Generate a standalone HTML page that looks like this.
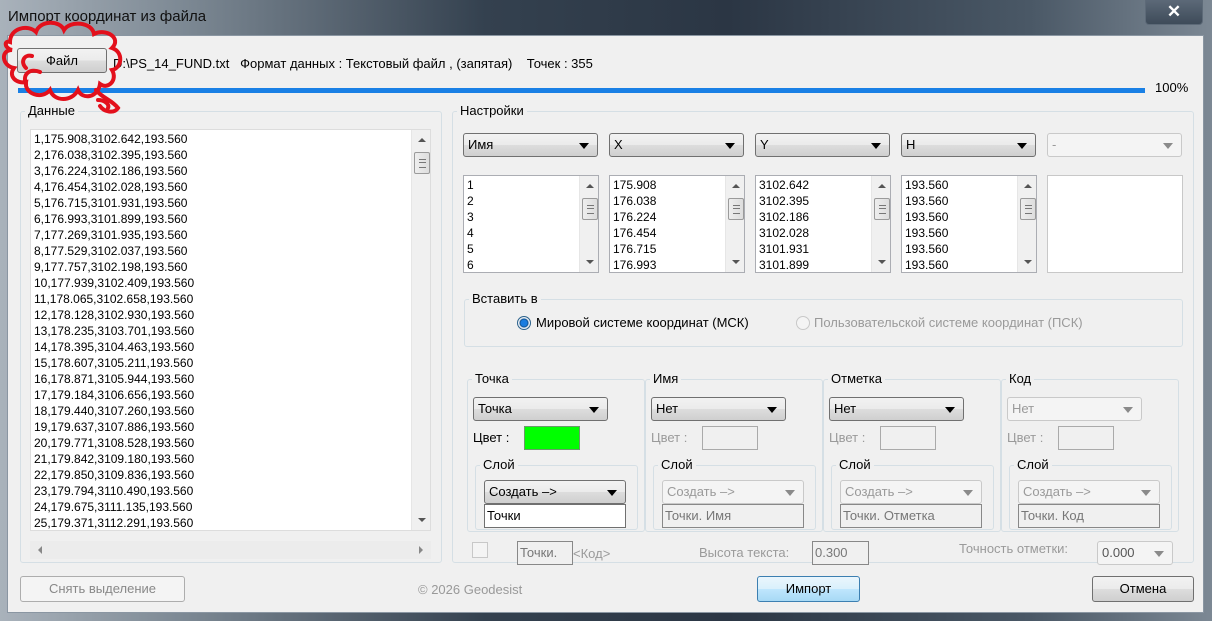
<!DOCTYPE html>
<html><head><meta charset="utf-8">
<style>
*{box-sizing:border-box;margin:0;padding:0}
body{width:1212px;height:621px;overflow:hidden;position:relative;font-family:"Liberation Sans",sans-serif;font-size:12px;color:#000;background:#2c3a48}
.a{position:absolute}
#frame{left:0;top:0;width:1212px;height:621px;background:linear-gradient(90deg,#a9b2bb 0%,#7d8994 15%,#34414f 40%,#2b3644 60%,#4a5866 85%,#7c8894 100%)}
#client{left:7px;top:35px;width:1197px;height:578px;background:#f0f0f0;border:1px solid #8a96a2}
.btn{position:absolute;border:1px solid #707070;border-radius:3px;background:linear-gradient(#f2f2f2,#ebebeb 50%,#dddddd 51%,#cfcfcf);text-align:center;font-size:13px}
.grp{position:absolute;border:1px solid #d5dfe5;border-radius:3px}
.gl{position:absolute;background:#f0f0f0;padding:0 3px;font-size:13px;top:-9px;left:4px;line-height:16px}
.cb{position:absolute;height:24px;border:1px solid #707070;border-radius:3px;background:linear-gradient(#f2f2f2,#ebebeb 50%,#dddddd 51%,#cfcfcf);font-size:13px;line-height:22px;padding-left:4px}
.cb::after{content:"";position:absolute;right:8px;top:9px;border-left:5px solid transparent;border-right:5px solid transparent;border-top:6px solid #000}
.cb.d{background:#f4f4f4;border-color:#c9c9c9;color:#9a9a9a}
.cb.d::after{border-top-color:#8a8a8a}
.lb{position:absolute;background:#fff;border:1px solid #abadb3;overflow:hidden;font-size:12px;line-height:16px}
.sb{position:absolute;top:0;right:0;width:19px;height:100%;background:#f0f0f0;border-left:1px solid #e6e6e6}
.sb .up{position:absolute;left:6px;top:8px;border-left:4px solid transparent;border-right:4px solid transparent;border-bottom:4px solid #555}
.sb .dn{position:absolute;left:6px;bottom:8px;border-left:4px solid transparent;border-right:4px solid transparent;border-top:4px solid #555}
.sb .th{position:absolute;left:2px;top:22px;width:16px;height:22px;border:1px solid #9a9a9a;border-radius:2px;background:linear-gradient(90deg,#eee,#ddd);}
.sb .th::after{content:"";position:absolute;left:4px;top:6px;width:7px;height:7px;border-top:1px solid #777;border-bottom:1px solid #777;background:linear-gradient(transparent 2px,#777 2px,#777 3px,transparent 3px)}
.tb{position:absolute;background:#fff;border:1px solid #707070;font-size:13px;line-height:22px;padding-left:2px}
.tb.d{background:#f0f0f0;border-color:#888;color:#777}
.gray{color:#9a9a9a}
</style></head><body>
<div class="a" id="frame"></div>
<div class="a" style="left:8px;top:8px;font-size:15px;color:#111">Импорт координат из файла</div>
<div class="a" style="left:1145px;top:0;width:58px;height:25px;border:1px solid #5d6a78;border-top:none;border-radius:0 0 4px 4px;background:linear-gradient(#5c6978,#3e4b59);color:#fff;text-align:center;font-size:17px;font-weight:bold;line-height:24px">✕</div>
<div class="a" id="client"></div>

<div class="btn" style="left:17px;top:48px;width:90px;height:25px;line-height:23px">Файл</div>
<div class="a" style="left:113px;top:56px;font-size:13px">D:\PS_14_FUND.txt &nbsp; Формат данных : Текстовый файл , (запятая) &nbsp;&nbsp; Точек : 355</div>
<div class="a" style="left:18px;top:88px;width:1127px;height:5px;background:#1a80e5"></div>
<div class="a" style="left:1155px;top:80px;font-size:13px">100%</div>

<!-- Данные -->
<div class="grp" style="left:20px;top:111px;width:422px;height:452px"><div class="gl">Данные</div></div>
<div class="lb" style="left:30px;top:129px;width:401px;height:402px;border-color:#ddd">
<div style="padding:1px 0 0 3px">
1,175.908,3102.642,193.560<br>2,176.038,3102.395,193.560<br>3,176.224,3102.186,193.560<br>4,176.454,3102.028,193.560<br>5,176.715,3101.931,193.560<br>6,176.993,3101.899,193.560<br>7,177.269,3101.935,193.560<br>8,177.529,3102.037,193.560<br>9,177.757,3102.198,193.560<br>10,177.939,3102.409,193.560<br>11,178.065,3102.658,193.560<br>12,178.128,3102.930,193.560<br>13,178.235,3103.701,193.560<br>14,178.395,3104.463,193.560<br>15,178.607,3105.211,193.560<br>16,178.871,3105.944,193.560<br>17,179.184,3106.656,193.560<br>18,179.440,3107.260,193.560<br>19,179.637,3107.886,193.560<br>20,179.771,3108.528,193.560<br>21,179.842,3109.180,193.560<br>22,179.850,3109.836,193.560<br>23,179.794,3110.490,193.560<br>24,179.675,3111.135,193.560<br>25,179.371,3112.291,193.560</div>
<div class="sb"><div class="up"></div><div class="dn"></div><div class="th"></div></div></div>
<div class="a" style="left:30px;top:541px;width:401px;height:18px;background:#ececec">
<div class="a" style="left:8px;top:5px;border-top:4px solid transparent;border-bottom:4px solid transparent;border-right:4px solid #888"></div>
<div class="a" style="right:8px;top:5px;border-top:4px solid transparent;border-bottom:4px solid transparent;border-left:4px solid #888"></div></div>

<!-- Настройки -->
<div class="grp" style="left:452px;top:111px;width:742px;height:452px"><div class="gl">Настройки</div></div>
<div class="cb" style="left:463px;top:133px;width:135px">Имя</div>
<div class="cb" style="left:609px;top:133px;width:135px">X</div>
<div class="cb" style="left:755px;top:133px;width:135px">Y</div>
<div class="cb" style="left:901px;top:133px;width:135px">H</div>
<div class="cb d" style="left:1047px;top:133px;width:135px">-</div>

<div class="lb" style="left:463px;top:175px;width:136px;height:98px"><div style="padding:1px 0 0 3px">1<br>2<br>3<br>4<br>5<br>6</div><div class="sb"><div class="up"></div><div class="dn"></div><div class="th"></div></div></div>
<div class="lb" style="left:609px;top:175px;width:136px;height:98px"><div style="padding:1px 0 0 3px">175.908<br>176.038<br>176.224<br>176.454<br>176.715<br>176.993</div><div class="sb"><div class="up"></div><div class="dn"></div><div class="th"></div></div></div>
<div class="lb" style="left:755px;top:175px;width:136px;height:98px"><div style="padding:1px 0 0 3px">3102.642<br>3102.395<br>3102.186<br>3102.028<br>3101.931<br>3101.899</div><div class="sb"><div class="up"></div><div class="dn"></div><div class="th"></div></div></div>
<div class="lb" style="left:901px;top:175px;width:136px;height:98px"><div style="padding:1px 0 0 3px">193.560<br>193.560<br>193.560<br>193.560<br>193.560<br>193.560</div><div class="sb"><div class="up"></div><div class="dn"></div><div class="th"></div></div></div>
<div class="lb" style="left:1047px;top:175px;width:136px;height:98px;border-color:#c8c8c8"></div>

<div class="grp" style="left:464px;top:299px;width:719px;height:48px"><div class="gl">Вставить в</div></div>
<div class="a" style="left:517px;top:316px;width:14px;height:14px;border-radius:50%;border:1px solid #2c628b;background:radial-gradient(circle,#1a7de0 0 3px,#0d4f8f 4px,#e8eef4 5px)"></div>
<div class="a" style="left:536px;top:315px;font-size:13px">Мировой системе координат (МСК)</div>
<div class="a" style="left:796px;top:316px;width:14px;height:14px;border-radius:50%;border:1px solid #c8c8c8;background:#f4f4f4"></div>
<div class="a gray" style="left:814px;top:315px;font-size:13px">Пользовательской системе координат (ПСК)</div>

<!-- four groups -->
<div class="grp" style="left:467px;top:379px;width:178px;height:153px"><div class="gl">Точка</div></div>
<div class="grp" style="left:645px;top:379px;width:178px;height:153px"><div class="gl">Имя</div></div>
<div class="grp" style="left:823px;top:379px;width:178px;height:153px"><div class="gl">Отметка</div></div>
<div class="grp" style="left:1001px;top:379px;width:178px;height:153px"><div class="gl">Код</div></div>

<div class="cb" style="left:473px;top:397px;width:135px">Точка</div>
<div class="cb" style="left:651px;top:397px;width:135px">Нет</div>
<div class="cb" style="left:829px;top:397px;width:135px">Нет</div>
<div class="cb d" style="left:1007px;top:397px;width:135px">Нет</div>

<div class="a" style="left:473px;top:430px;font-size:13px">Цвет :</div>
<div class="a" style="left:524px;top:426px;width:56px;height:24px;background:#00ff00;border:1px solid #6a9a6a"></div>
<div class="a gray" style="left:651px;top:430px;font-size:13px">Цвет :</div>
<div class="a" style="left:702px;top:426px;width:56px;height:24px;border:1px solid #aaa"></div>
<div class="a gray" style="left:829px;top:430px;font-size:13px">Цвет :</div>
<div class="a" style="left:880px;top:426px;width:56px;height:24px;border:1px solid #aaa"></div>
<div class="a gray" style="left:1007px;top:430px;font-size:13px">Цвет :</div>
<div class="a" style="left:1058px;top:426px;width:56px;height:24px;border:1px solid #aaa"></div>

<div class="grp" style="left:475px;top:465px;width:163px;height:65px"><div class="gl">Слой</div></div>
<div class="grp" style="left:653px;top:465px;width:163px;height:65px"><div class="gl">Слой</div></div>
<div class="grp" style="left:831px;top:465px;width:163px;height:65px"><div class="gl">Слой</div></div>
<div class="grp" style="left:1009px;top:465px;width:163px;height:65px"><div class="gl">Слой</div></div>

<div class="cb" style="left:484px;top:480px;width:142px">Создать –&gt;</div>
<div class="tb" style="left:484px;top:504px;width:142px;height:24px">Точки</div>
<div class="cb d" style="left:662px;top:480px;width:142px">Создать –&gt;</div>
<div class="tb d" style="left:662px;top:504px;width:142px;height:24px">Точки. Имя</div>
<div class="cb d" style="left:840px;top:480px;width:142px">Создать –&gt;</div>
<div class="tb d" style="left:840px;top:504px;width:142px;height:24px">Точки. Отметка</div>
<div class="cb d" style="left:1018px;top:480px;width:142px">Создать –&gt;</div>
<div class="tb d" style="left:1018px;top:504px;width:142px;height:24px">Точки. Код</div>

<!-- bottom row -->
<div class="a" style="left:472px;top:542px;width:16px;height:16px;border:1px solid #c8c8c8;background:#f4f4f4"></div>
<div class="tb d" style="left:517px;top:541px;width:56px;height:24px">Точки.</div>
<div class="a gray" style="left:573px;top:546px;font-size:13px">&lt;Код&gt;</div>
<div class="a gray" style="left:699px;top:545px;font-size:13px">Высота текста:</div>
<div class="tb d" style="left:812px;top:541px;width:57px;height:24px">0.300</div>
<div class="a gray" style="left:959px;top:541px;font-size:13px">Точность отметки:</div>
<div class="cb d" style="left:1097px;top:541px;width:76px;background:#f4f4f4;color:#555">0.000</div>

<!-- buttons -->
<div class="btn" style="left:20px;top:576px;width:165px;height:26px;line-height:24px;color:#888;border-color:#adadad;background:#f4f4f4">Снять выделение</div>
<div class="a" style="left:418px;top:582px;font-size:13px;color:#999">© 2026 Geodesist</div>
<div class="btn" style="left:757px;top:576px;width:103px;height:26px;line-height:24px;border-color:#3c7fb1;background:linear-gradient(#eaf6fd,#d9f0fc 50%,#bee6fd 51%,#a7d9f5)">Импорт</div>
<div class="btn" style="left:1092px;top:576px;width:102px;height:26px;line-height:24px">Отмена</div>

<!-- red cloud annotation -->
<svg class="a" style="left:0;top:0" width="140" height="120" viewBox="0 0 140 120">
<g fill="none" stroke="#e3101c" stroke-width="4" stroke-linecap="round">
<path d="M10 42 C10 28 28 24 36 32 C40 20 60 20 64 30 C70 20 92 22 94 34 C106 28 122 38 112 48 C124 52 122 68 112 70 C118 80 108 90 100 84 C98 98 82 100 78 90 C72 102 54 102 50 90 C42 100 24 94 26 82 C16 84 8 76 14 68 C2 66 0 50 12 50 C4 48 4 40 10 42 Z"/>
<path d="M26 84 C22 74 30 68 40 72"/>
<path d="M26 68 C20 62 24 54 32 56"/>
<path d="M96 90 C102 98 112 100 118 108 C114 114 104 112 100 106"/>
<path d="M98 100 C104 100 110 104 108 108"/>
</g></svg>
</body></html>
